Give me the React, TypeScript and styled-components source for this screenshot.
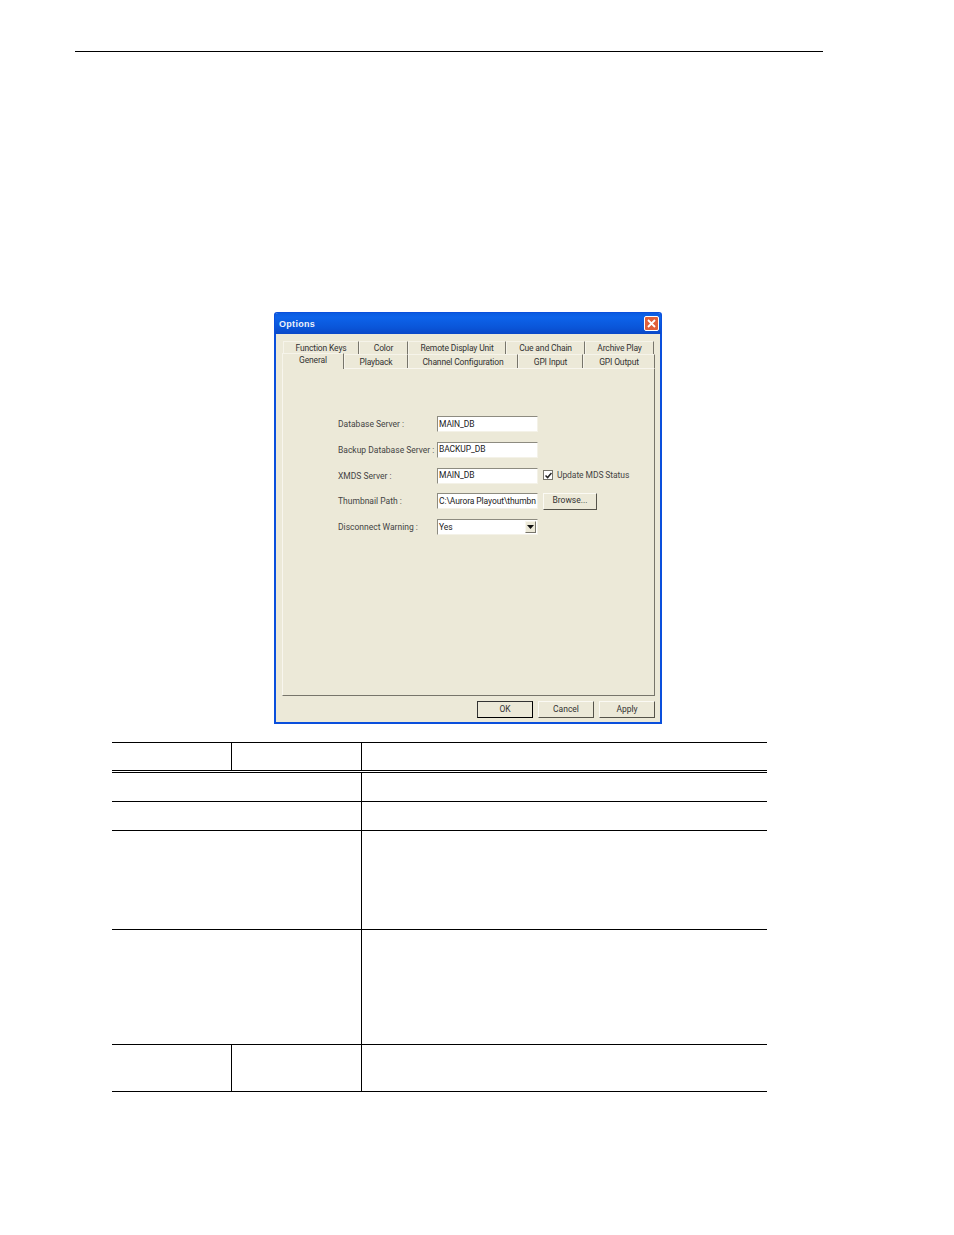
import React from "react";
import styled, { createGlobalStyle } from "styled-components";

const UI_FONT = `"Roboto", "Liberation Sans", sans-serif`;

const GlobalStyle = createGlobalStyle`
  html, body {
    margin: 0;
    padding: 0;
    background: #fff;
  }
`;

const Page = styled.div`
  width: 954px;
  height: 1235px;
  padding-top: 51px;
  box-sizing: border-box;
  overflow: hidden;
`;

const HeaderRule = styled.div`
  width: 748px;
  margin-left: 75px;
  border-top: 1px solid #000;
`;

const Window = styled.div`
  width: 388px;
  height: 412px;
  margin: 260px 0 0 274px;
  box-sizing: border-box;
  display: flex;
  flex-direction: column;
  background: #ece9d8;
  border: solid #0a4fdc;
  border-width: 1px 2px 2px 2px;
  border-radius: 3px 3px 0 0;
`;

const TitleBar = styled.div`
  height: 21px;
  margin: 0 -1px;
  padding: 0 2px 0 4px;
  display: flex;
  align-items: center;
  justify-content: space-between;
  background: linear-gradient(180deg, #0a5be0 0%, #0d63ea 20%, #0a55d8 70%, #0a48c8 100%);
  border-radius: 3px 3px 0 0;
`;

const Title = styled.span`
  font: bold 9px "Liberation Sans", sans-serif;
  letter-spacing: 0.3px;
  color: #eef2fa;
`;

const CloseButton = styled.div`
  width: 15px;
  height: 15px;
  box-sizing: border-box;
  display: flex;
  align-items: center;
  justify-content: center;
  background: #e0603a;
  border: 1px solid #fff;
  border-radius: 2px;
`;

const Body = styled.div`
  flex: 1;
  display: flex;
  flex-direction: column;
  padding: 7px 5px 4px 6px;
  min-height: 0;
`;

const TabRow = styled.div<{ $top?: boolean }>`
  display: flex;
  height: ${({ $top }) => ($top ? 13 : 14)}px;
  padding-left: ${({ $top }) => ($top ? 1 : 0)}px;
  & > div {
    padding-bottom: ${({ $top }) => ($top ? 1 : 0)}px;
  }
`;

const Tab = styled.div<{ $width: number; $active?: boolean }>`
  width: ${({ $width }) => $width}px;
  box-sizing: border-box;
  display: flex;
  justify-content: center;
  align-items: ${({ $active }) => ($active ? "flex-start" : "center")};
  padding-top: ${({ $active }) => ($active ? 1 : 0)}px;
  position: relative;
  z-index: ${({ $active }) => ($active ? 1 : 0)};
  height: ${({ $active }) => ($active ? 16 : 14)}px;
  margin-top: ${({ $active }) => ($active ? -1 : 0)}px;
  background: #ece9d8;
  border-top: 1px solid #f6f4ea;
  border-left: 1px solid #f6f4ea;
  border-right: 1px solid #77756b;
  font: 8.5px ${UI_FONT};
  letter-spacing: -0.15px;
  color: #333;
  white-space: nowrap;
`;

const Pane = styled.div`
  flex: 1;
  box-sizing: border-box;
  display: flex;
  flex-direction: column;
  gap: 9.75px;
  padding: 47px 0 0 55px;
  border: 1px solid #f8f6ee;
  border-right: 1px solid #77756b;
  border-bottom: 1px solid #77756b;
  min-height: 0;
`;

const FormRow = styled.div`
  display: flex;
  align-items: center;
  height: 16px;
`;

const Label = styled.label`
  width: 99px;
  flex: none;
  font: 8.5px ${UI_FONT};
  color: #444;
  white-space: nowrap;
`;

const Field = styled.div`
  width: 101px;
  height: 16px;
  flex: none;
  box-sizing: border-box;
  display: flex;
  align-items: center;
  justify-content: space-between;
  padding: 0 1px 1px 1px;
  overflow: hidden;
  background: #fff;
  border: 1px solid #a9a79c;
  border-color: #8d8b80 #f4f2e8 #f4f2e8 #8d8b80;
  font: 8.5px ${UI_FONT};
  letter-spacing: -0.1px;
  color: #222;
  white-space: nowrap;
`;

const Arrow = styled.div`
  width: 11px;
  height: 12px;
  flex: none;
  display: flex;
  align-items: center;
  justify-content: center;
  background: #ece9d8;
  border: 1px solid;
  border-color: #f8f6ee #77756b #77756b #f8f6ee;
  box-sizing: border-box;
`;

const CheckWrap = styled.div`
  display: flex;
  align-items: center;
  gap: 4px;
  margin-left: 5px;
  padding-bottom: 1px;
  font: 8.5px ${UI_FONT};
  letter-spacing: -0.08px;
  color: #444;
  white-space: nowrap;
`;

const CheckBox = styled.div`
  width: 10px;
  height: 10px;
  box-sizing: border-box;
  display: flex;
  align-items: center;
  justify-content: center;
  background: #fff;
  border: 1px solid #77756b;
`;

const DialogButton = styled.div<{ $width: number; $default?: boolean }>`
  width: ${({ $width }) => $width}px;
  height: 17px;
  flex: none;
  box-sizing: border-box;
  display: flex;
  align-items: center;
  justify-content: center;
  padding-bottom: 2px;
  background: #ece9d8;
  border: 1px solid;
  border-color: ${({ $default }) =>
    $default ? "#333 #000 #000 #333" : "#fbfaf4 #55534a #55534a #fbfaf4"};
  font: 8.5px ${UI_FONT};
  color: #333;
`;

const BrowseButton = styled(DialogButton)`
  margin-left: 5px;
`;

const ButtonBar = styled.div`
  display: flex;
  justify-content: flex-end;
  gap: 5px;
  padding-top: 5px;
  height: 17px;
`;

const Table = styled.div`
  width: 655px;
  margin: 18px 0 0 112px;
  border-top: 1px solid #000;
`;

const Row = styled.div<{ $height: number; $double?: boolean }>`
  display: grid;
  grid-template-columns: 120px 130px 405px;
  height: ${({ $height }) => $height}px;
  box-sizing: border-box;
  border-bottom: ${({ $double }) => ($double ? "3px double #000" : "1px solid #000")};
`;

const Cell = styled.div<{ $span?: number; $last?: boolean }>`
  grid-column: span ${({ $span }) => $span ?? 1};
  border-right: ${({ $last }) => ($last ? "none" : "1px solid #000")};
`;

const fields = [
  { label: "Database Server :", value: "MAIN_DB" },
  { label: "Backup Database Server :", value: "BACKUP_DB" },
];

export default function App() {
  return (
    <Page>
      <GlobalStyle />
      <HeaderRule />
      <Window>
        <TitleBar>
          <Title>Options</Title>
          <CloseButton>
            <svg width="9" height="9" viewBox="0 0 9 9">
              <path d="M1 1 L8 8 M8 1 L1 8" stroke="#fff" strokeWidth="1.8" />
            </svg>
          </CloseButton>
        </TitleBar>
        <Body>
          <TabRow $top>
            <Tab $width={76}>Function Keys</Tab>
            <Tab $width={49}>Color</Tab>
            <Tab $width={98}>Remote Display Unit</Tab>
            <Tab $width={79}>Cue and Chain</Tab>
            <Tab $width={69}>Archive Play</Tab>
          </TabRow>
          <TabRow>
            <Tab $width={62} $active>General</Tab>
            <Tab $width={64}>Playback</Tab>
            <Tab $width={110}>Channel Configuration</Tab>
            <Tab $width={65}>GPI Input</Tab>
            <Tab $width={72}>GPI Output</Tab>
          </TabRow>
          <Pane>
            {fields.map((f) => (
              <FormRow key={f.label}>
                <Label>{f.label}</Label>
                <Field>{f.value}</Field>
              </FormRow>
            ))}
            <FormRow>
              <Label>XMDS Server :</Label>
              <Field>MAIN_DB</Field>
              <CheckWrap>
                <CheckBox>
                  <svg width="7" height="7" viewBox="0 0 7 7">
                    <path d="M0.5 3.5 L2.6 5.6 L6.5 1" fill="none" stroke="#222" strokeWidth="1.5" />
                  </svg>
                </CheckBox>
                Update MDS Status
              </CheckWrap>
            </FormRow>
            <FormRow>
              <Label>Thumbnail Path :</Label>
              <Field>C:\Aurora Playout\thumbn</Field>
              <BrowseButton $width={54}>Browse...</BrowseButton>
            </FormRow>
            <FormRow>
              <Label>Disconnect Warning :</Label>
              <Field>
                Yes
                <Arrow>
                  <svg width="7" height="4" viewBox="0 0 7 4">
                    <path d="M0 0 H7 L3.5 4 Z" fill="#111" />
                  </svg>
                </Arrow>
              </Field>
            </FormRow>
          </Pane>
          <ButtonBar>
            <DialogButton $width={56} $default>OK</DialogButton>
            <DialogButton $width={56}>Cancel</DialogButton>
            <DialogButton $width={56}>Apply</DialogButton>
          </ButtonBar>
        </Body>
      </Window>
      <Table>
        <Row $height={30} $double>
          <Cell />
          <Cell />
          <Cell $last />
        </Row>
        <Row $height={29}>
          <Cell $span={2} />
          <Cell $last />
        </Row>
        <Row $height={29}>
          <Cell $span={2} />
          <Cell $last />
        </Row>
        <Row $height={99}>
          <Cell $span={2} />
          <Cell $last />
        </Row>
        <Row $height={115}>
          <Cell $span={2} />
          <Cell $last />
        </Row>
        <Row $height={47}>
          <Cell />
          <Cell />
          <Cell $last />
        </Row>
      </Table>
    </Page>
  );
}
